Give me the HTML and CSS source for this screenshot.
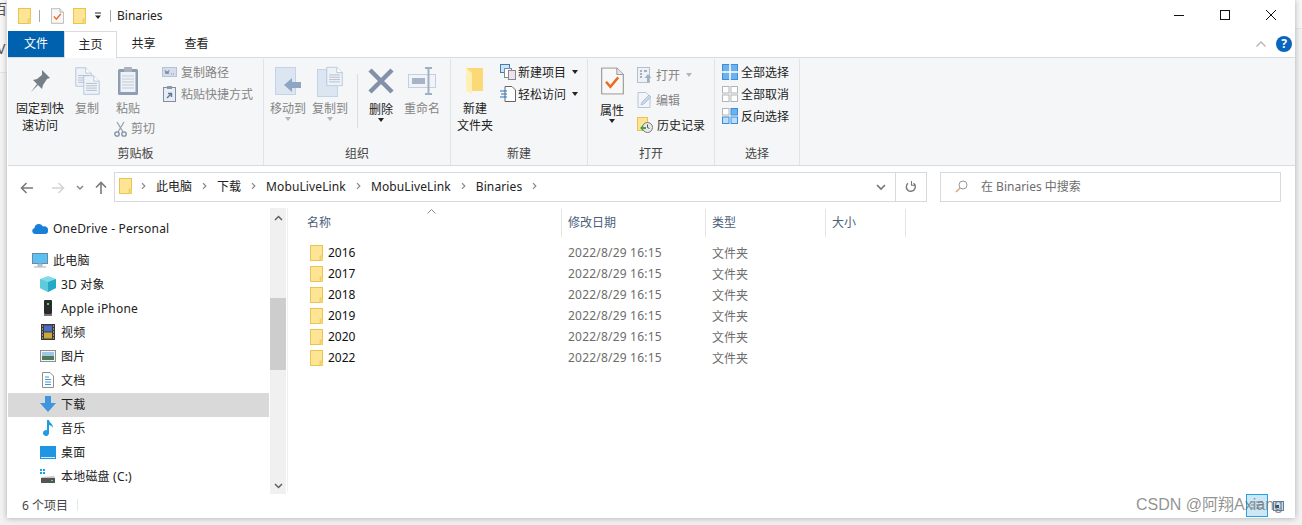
FILE: index.html
```html
<!DOCTYPE html>
<html lang="zh-CN">
<head>
  <meta charset="UTF-8">
  <title>Binaries</title>
  <link rel="stylesheet" href="styles.css">
</head>
<body>
  <svg class="defs" width="0" height="0">
    <symbol id="folder" viewBox="0 0 13 16">
      <rect x="0.5" y="0.5" width="12" height="15" fill="#fee596" stroke="#ebc34f"/>
      <rect x="10" y="11" width="3" height="5" fill="#f6d673" stroke="#ebc34f" stroke-width="0.6"/>
    </symbol>
    <symbol id="chev" viewBox="0 0 6 10">
      <path d="M1.2 1.5 4.6 5 1.2 8.5" fill="none" stroke="#8a8a8a" stroke-width="1.5"/>
    </symbol>
    <symbol id="doc-check" viewBox="0 0 32 38">
      <path d="M1 1h21l9 9v27H1z" fill="#f8f8f8" stroke="#8c8c8c" stroke-width="1.4"/>
      <path d="M22 1v9h9" fill="#e6e6e6" stroke="#8c8c8c" stroke-width="1.2"/>
      <path d="M7 20l6 7 11-13" fill="none" stroke="#ef6a1f" stroke-width="3.4"/>
    </symbol>
    <symbol id="page" viewBox="0 0 22 26">
      <path d="M1 1h13l7 7v17H1z" fill="#eef3fa" stroke="#a9bad4"/>
      <path d="M14 1v7h7" fill="#fff" stroke="#a9bad4"/>
      <path d="M4 11h14M4 14h14M4 17h14M4 20h14" stroke="#a8b0bc"/>
    </symbol>
    <symbol id="sel" viewBox="0 0 16 16">
      <rect x="0.5" y="0.5" width="6.5" height="6.5" fill="#fff" stroke="#b5b5b5"/>
      <rect x="9" y="0.5" width="6.5" height="6.5" fill="#fff" stroke="#b5b5b5"/>
      <rect x="0.5" y="9" width="6.5" height="6.5" fill="#fff" stroke="#b5b5b5"/>
      <rect x="9" y="9" width="6.5" height="6.5" fill="#fff" stroke="#b5b5b5"/>
    </symbol>
  </svg>

  <div class="desktop">
    <div class="behind-left"><span class="peek-a">百</span><span class="peek-b">V</span></div>

    <div class="window">
      <div class="titlebar">
        <svg class="qa-folder" width="13" height="16"><use href="#folder"/></svg>
        <span class="qa-sep"></span>
        <svg class="qa-doc" width="13" height="16"><use href="#doc-check"/></svg>
        <svg class="qa-folder2" width="13" height="16"><use href="#folder"/></svg>
        <svg class="qa-drop" width="8" height="8" viewBox="0 0 8 8"><path d="M1 1h6" stroke="#222"/><path d="M1 3.500h6L4 7z" fill="#222"/></svg>
        <span class="qa-sep qa-sep-last"></span>
        <span class="title-text">Binaries</span>
        <div class="win-buttons">
          <svg width="12" height="12" viewBox="0 0 12 12"><path d="M1 6.500h10" stroke="#111"/></svg>
          <svg width="12" height="12" viewBox="0 0 12 12"><rect x="1.500" y="1.500" width="9" height="9" fill="none" stroke="#111"/></svg>
          <svg width="12" height="12" viewBox="0 0 12 12"><path d="M1 1l10 10M11 1 1 11" stroke="#111"/></svg>
        </div>
      </div>

      <div class="tabs">
        <div class="tab tab-file">文件</div>
        <div class="tab tab-active">主页</div>
        <div class="tab tab-share">共享</div>
        <div class="tab tab-view">查看</div>
        <div class="tabs-right">
          <svg width="12" height="8" viewBox="0 0 12 8"><path d="M1.500 6.500 6 2l4.500 4.500" fill="none" stroke="#b4b4b4" stroke-width="1.300"/></svg>
          <span class="help">?</span>
        </div>
      </div>

      <div class="ribbon">
        <section class="group group-clip">
          <div class="group-body">
            <div class="big big-pin">
              <div class="big-icon">
                <svg width="22" height="24" viewBox="0 0 22 24"><path d="M13 1l8 8-3 1-4 6-1 4-4-4-7 7 6-8-4-4 4-1 5-4z" fill="#757f88"/></svg>
              </div>
              <span class="on">固定到快</span>
              <span class="on">速访问</span>
            </div>
            <div class="big big-copy">
              <div class="big-icon">
                <svg width="25" height="29" viewBox="0 0 25 29">
                  <svg x="0" y="0" width="17" height="20" viewBox="0 0 22 26"><use href="#page"/></svg>
                  <svg x="8" y="7" width="17" height="22" viewBox="0 0 22 26"><use href="#page"/></svg>
                </svg>
              </div>
              <span class="off">复制</span>
            </div>
            <div class="big big-paste">
              <div class="big-icon">
                <svg width="22" height="30" viewBox="0 0 22 30">
                  <rect x="1" y="3" width="20" height="26" rx="1.500" fill="#8e9db2"/>
                  <rect x="3.500" y="6" width="15" height="20" fill="#eef2f8"/>
                  <path d="M5 10h12M5 13h12M5 16h12M5 19h12M5 22h12" stroke="#c3cbd6"/>
                  <rect x="7" y="1" width="8" height="5" rx="1" fill="#a9b2bd"/>
                </svg>
              </div>
              <span class="off">粘贴</span>
              <div class="cut">
                <svg width="13" height="16" viewBox="0 0 13 16"><path d="M3 1l6 10M10 1 4 11" stroke="#9aa3ad" stroke-width="1.300"/><circle cx="3" cy="13" r="2.200" fill="none" stroke="#7f8fa6" stroke-width="1.300"/><circle cx="10" cy="13" r="2.200" fill="none" stroke="#7f8fa6" stroke-width="1.300"/></svg>
                <span class="off">剪切</span>
              </div>
            </div>
            <div class="small-col small-clip">
              <div class="small">
                <svg width="15" height="10" viewBox="0 0 15 10"><rect x="0.500" y="0.500" width="14" height="9" fill="#d5dded" stroke="#b6c1d3"/><path d="M3 3l1 4 1-3 1 3 1-4M9 7h1M11 7h1" fill="none" stroke="#6c7a90" stroke-width="0.800"/></svg>
                <span class="off">复制路径</span>
              </div>
              <div class="small">
                <svg width="13" height="16" viewBox="0 0 13 16"><rect x="0.500" y="1.500" width="12" height="14" fill="#e8edf4" stroke="#7f8ea3"/><rect x="4" y="0" width="5" height="3" fill="#8e99a8"/><path d="M4 12l4-4M5 7.500h3.500V11" fill="none" stroke="#5f7896" stroke-width="1.400"/></svg>
                <span class="off">粘贴快捷方式</span>
              </div>
            </div>
          </div>
          <div class="group-title">剪贴板</div>
        </section>

        <section class="group group-org">
          <div class="group-body">
            <div class="big big-move">
              <div class="big-icon">
                <svg width="26" height="28" viewBox="0 0 26 28"><rect x="0.500" y="0.500" width="20" height="27" fill="#dce6f3" stroke="#c5d3e6"/><path d="M9 18l8-7v4h9v6h-9v4z" fill="#8ea6c2"/></svg>
              </div>
              <span class="off">移动到</span>
              <i class="drop drop-off"></i>
            </div>
            <div class="big big-copyto">
              <div class="big-icon">
                <svg width="26" height="31" viewBox="0 0 26 31"><rect x="0.500" y="3.500" width="20" height="27" fill="#dce6f3" stroke="#c5d3e6"/><svg x="9" y="0" width="17" height="21" viewBox="0 0 22 26"><use href="#page"/></svg></svg>
              </div>
              <span class="off">复制到</span>
              <i class="drop drop-off"></i>
            </div>
            <span class="vsep"></span>
            <div class="big big-del">
              <div class="big-icon">
                <svg width="26" height="26" viewBox="0 0 26 26"><path d="M2 2l22 22M24 2 2 24" stroke="#8290a8" stroke-width="4.500"/></svg>
              </div>
              <span class="on lower">删除</span>
              <i class="drop"></i>
            </div>
            <div class="big big-ren">
              <div class="big-icon">
                <svg width="28" height="28" viewBox="0 0 28 28"><rect x="0.500" y="7.500" width="27" height="13" fill="#f0f4f9" stroke="#c3d0e0"/><rect x="4" y="11" width="13" height="6" fill="#a7b4c7"/><path d="M17 1h7M17 27h7M20.500 1v26" stroke="#9fb0c6" stroke-width="2"/></svg>
              </div>
              <span class="off">重命名</span>
            </div>
          </div>
          <div class="group-title">组织</div>
        </section>

        <section class="group group-new">
          <div class="group-body">
            <div class="big big-newf">
              <div class="big-icon">
                <svg width="18" height="28" viewBox="0 0 18 28"><path d="M0 1h17v23H5z" fill="#fbd977"/><path d="M0 1l6 5v21L0 24z" fill="#fff0b8"/></svg>
              </div>
              <span class="on">新建</span>
              <span class="on">文件夹</span>
            </div>
            <div class="small-col small-new">
              <div class="small">
                <svg width="16" height="16" viewBox="0 0 16 16"><rect x="0.500" y="0.500" width="9" height="8" fill="#cfe3f7" stroke="#3f7fb8"/><rect x="4.500" y="4.500" width="7" height="9" fill="#fff" stroke="#7e8a98"/><rect x="8.500" y="6.500" width="7" height="9" fill="#f4e1e6" stroke="#7e8a98"/></svg>
                <span class="on">新建项目</span>
                <i class="drop drop-side"></i>
              </div>
              <div class="small">
                <svg width="16" height="16" viewBox="0 0 16 16"><path d="M5 .5h7l3.500 3.500v11.500H5z" fill="#fff" stroke="#666"/><path d="M0 5h7M1 8h6M0 11h7" stroke="#1f77c9" stroke-width="1.200"/></svg>
                <span class="on">轻松访问</span>
                <i class="drop drop-side"></i>
              </div>
            </div>
          </div>
          <div class="group-title">新建</div>
        </section>

        <section class="group group-open">
          <div class="group-body">
            <div class="big big-prop">
              <div class="big-icon">
                <svg width="23" height="28" viewBox="0 0 32 38"><use href="#doc-check"/></svg>
              </div>
              <span class="on lower2">属性</span>
              <i class="drop"></i>
            </div>
            <div class="small-col small-open">
              <div class="small">
                <svg width="15" height="16" viewBox="0 0 15 16"><rect x="0.500" y="0.500" width="12" height="15" fill="#eef1f6" stroke="#b4bfce"/><path d="M3 4h2M3 7h2M3 10h2M7 4h3" stroke="#8c9bb0" stroke-width="1.400"/><path d="M11 7l3.500 4H12v4h-2v-4H7.500z" fill="#9fb0c6"/></svg>
                <span class="off">打开</span>
                <i class="drop drop-side drop-off"></i>
              </div>
              <div class="small">
                <svg width="15" height="16" viewBox="0 0 15 16"><path d="M1 .5h8l4 4v11H1z" fill="#f2f5f9" stroke="#b8c4d4"/><path d="M4 13l1-3 7-7 2 2-7 7z" fill="#c7d6e8" stroke="#9fb0c6" stroke-width="0.600"/></svg>
                <span class="off">编辑</span>
              </div>
              <div class="small">
                <svg width="16" height="16" viewBox="0 0 16 16"><rect x="0.500" y="0.500" width="10" height="13" fill="#fee596" stroke="#ebc34f"/><circle cx="10.500" cy="10.500" r="5" fill="#e9e9e9" stroke="#777"/><path d="M10.500 7.500v3l2 1" fill="none" stroke="#555"/><path d="M3 11l3-3v2h3v2H6v2z" fill="#3fa34d"/></svg>
                <span class="on">历史记录</span>
              </div>
            </div>
          </div>
          <div class="group-title">打开</div>
        </section>

        <section class="group group-select">
          <div class="group-body">
            <div class="small-col small-select">
              <div class="small">
                <svg width="16" height="16" viewBox="0 0 16 16"><rect x="0.500" y="0.500" width="15" height="15" fill="#6fb1ec" stroke="#3a8edb"/><path d="M8 0v16M0 8h16" stroke="#fff" stroke-width="1.500"/></svg>
                <span class="on">全部选择</span>
              </div>
              <div class="small">
                <svg width="16" height="16"><use href="#sel"/></svg>
                <span class="on">全部取消</span>
              </div>
              <div class="small">
                <svg width="16" height="16" viewBox="0 0 16 16"><rect x="0.500" y="0.500" width="6.500" height="6.500" fill="#fff" stroke="#b5b5b5"/><rect x="9" y="0.500" width="6.500" height="6.500" fill="#6fb1ec" stroke="#3a8edb"/><rect x="0.500" y="9" width="6.500" height="6.500" fill="#bcdcf7" stroke="#3a8edb"/><rect x="9" y="9" width="6.500" height="6.500" fill="#bcdcf7" stroke="#3a8edb"/></svg>
                <span class="on">反向选择</span>
              </div>
            </div>
          </div>
          <div class="group-title">选择</div>
        </section>
      </div>

      <div class="navbar">
        <div class="nav-buttons">
          <svg width="14" height="12" viewBox="0 0 14 12"><path d="M13 6H2M6.500 1 1.500 6l5 5" fill="none" stroke="#7a7a7a" stroke-width="1.600"/></svg>
          <svg class="nav-fwd" width="14" height="12" viewBox="0 0 14 12"><path d="M1 6h11M7.500 1l5 5-5 5" fill="none" stroke="#d4d4d4" stroke-width="1.600"/></svg>
          <svg class="nav-recent" width="8" height="6" viewBox="0 0 8 6"><path d="M1 1l3 3 3-3" fill="none" stroke="#8a8a8a" stroke-width="1.500"/></svg>
          <svg class="nav-up" width="12" height="13" viewBox="0 0 12 13"><path d="M6 13V2M1 6.500l5-5 5 5" fill="none" stroke="#7a7a7a" stroke-width="1.600"/></svg>
        </div>
        <div class="address">
          <div class="crumbs">
            <svg class="crumb-folder" width="13" height="16"><use href="#folder"/></svg>
            <svg class="crumb-chev" width="5" height="10"><use href="#chev"/></svg>
            <span>此电脑</span>
            <svg class="crumb-chev" width="5" height="10"><use href="#chev"/></svg>
            <span>下载</span>
            <svg class="crumb-chev" width="5" height="10"><use href="#chev"/></svg>
            <span class="crumb-latin">MobuLiveLink</span>
            <svg class="crumb-chev" width="5" height="10"><use href="#chev"/></svg>
            <span class="crumb-latin">MobuLiveLink</span>
            <svg class="crumb-chev" width="5" height="10"><use href="#chev"/></svg>
            <span class="crumb-latin">Binaries</span>
            <svg class="crumb-chev" width="5" height="10"><use href="#chev"/></svg>
          </div>
          <div class="addr-drop">
            <svg width="10" height="7" viewBox="0 0 10 7"><path d="M1 1l4 4 4-4" fill="none" stroke="#777" stroke-width="1.700"/></svg>
          </div>
          <div class="addr-refresh">
            <svg width="12" height="12" viewBox="0 0 12 12"><path d="M8.500 2.200A4.500 4.500 0 1 1 3 2.300" fill="none" stroke="#777" stroke-width="1.400"/><path d="M6.500 0v4.200H10.500" fill="none" stroke="#777" stroke-width="1.100"/></svg>
          </div>
        </div>
        <div class="search">
          <svg width="13" height="13" viewBox="0 0 13 13"><circle cx="8" cy="5" r="4" fill="none" stroke="#9a9a9a"/><path d="M5 8l-4 4" stroke="#c9a27c" stroke-width="1.200"/></svg>
          <span>在 Binaries 中搜索</span>
        </div>
      </div>

      <div class="main">
        <aside class="sidebar">
          <div class="tree">
            <div class="tree-row tree-top tree-gap">
              <svg width="16" height="11" viewBox="0 0 16 11"><path d="M3 11a3 3 0 0 1-.5-5.900A4.500 4.500 0 0 1 11 3.500 3.800 3.800 0 0 1 16 8c0 1.800-1 3-3 3z" fill="#1a7fd6"/></svg>
              <span>OneDrive - Personal</span>
            </div>
            <div class="tree-row tree-top">
              <svg width="16" height="15" viewBox="0 0 16 15"><rect x="0.500" y="0.500" width="15" height="10" fill="#5cc0f3" stroke="#6d8aa0"/><path d="M6 11h4v2H6zM2 14h12" stroke="#9fb2c0" fill="#cfd8df"/></svg>
              <span>此电脑</span>
            </div>
            <div class="tree-row">
              <svg width="16" height="16" viewBox="0 0 16 16"><path d="M8 0l8 3v9l-8 4-8-4V3z" fill="#7fdbe8"/><path d="M8 6v10l8-4V3z" fill="#25a9c4"/><path d="M0 3l8 3v10l-8-4z" fill="#5ecbdd"/></svg>
              <span>3D 对象</span>
            </div>
            <div class="tree-row">
              <svg width="16" height="16" viewBox="0 0 16 16"><rect x="4" y="0" width="8" height="14" rx="1" fill="#2b2b2b"/><rect x="7" y="3" width="2" height="2" fill="#3fe05a"/><rect x="4" y="14" width="8" height="2" fill="#777"/></svg>
              <span>Apple iPhone</span>
            </div>
            <div class="tree-row">
              <svg width="16" height="16" viewBox="0 0 16 16"><rect x="1" y="0" width="14" height="16" fill="#3a3a3a"/><rect x="4" y="1.500" width="8" height="6" fill="#4a6fc4"/><rect x="4" y="8.500" width="8" height="6" fill="#c9a93c"/><path d="M2 2h1M2 5h1M2 8h1M2 11h1M2 14h1M13 2h1M13 5h1M13 8h1M13 11h1M13 14h1" stroke="#ddd"/></svg>
              <span>视频</span>
            </div>
            <div class="tree-row">
              <svg width="16" height="12" viewBox="0 0 16 12"><rect x="0.500" y="0.500" width="15" height="11" fill="#f4f4f4" stroke="#8e8e8e"/><rect x="2" y="2" width="12" height="4" fill="#9fc6e2"/><rect x="2" y="6" width="12" height="4" fill="#4d7a58"/></svg>
              <span>图片</span>
            </div>
            <div class="tree-row">
              <svg width="12" height="16" viewBox="0 0 12 16"><path d="M.5.500h7.500l3.500 3.500v11.500H.5z" fill="#fff" stroke="#8f8f8f"/><path d="M3 5h4M3 7.500h6M3 10h6M3 12.500h6" stroke="#3f9ad8"/></svg>
              <span>文档</span>
            </div>
            <div class="tree-row tree-selected">
              <svg width="16" height="16" viewBox="0 0 16 16"><path d="M5 0h6v7h5l-8 9-8-9h5z" fill="#3f94e0"/></svg>
              <span>下载</span>
            </div>
            <div class="tree-row">
              <svg width="12" height="16" viewBox="0 0 12 16"><path d="M5 0h2c.5 3 4 3.500 4 8-1-2-2-2.500-4-3v8a3 3 0 1 1-2-2.800z" fill="#1f9be6"/></svg>
              <span>音乐</span>
            </div>
            <div class="tree-row">
              <svg width="16" height="13" viewBox="0 0 16 13"><rect x="0" y="0" width="16" height="13" fill="#1f95e4"/><path d="M1 11.500h14" stroke="#d5efff"/></svg>
              <span>桌面</span>
            </div>
            <div class="tree-row">
              <svg width="16" height="14" viewBox="0 0 16 14"><path d="M0 0h2v2H0zM3 0h2v2H3zM0 3h2v2H0zM3 3h2v2H3z" fill="#18a3e6"/><path d="M2 8l12-1 1 2H1z" fill="#c6c6c6"/><rect x="1" y="9" width="14" height="5" fill="#555"/><rect x="11" y="11" width="2" height="1" fill="#4fe05a"/></svg>
              <span>本地磁盘 (C:)</span>
            </div>
          </div>
          <div class="scrollbar">
            <svg class="sb-up" width="9" height="6" viewBox="0 0 9 6"><path d="M1 5l3.500-3.500L8 5" fill="none" stroke="#606060" stroke-width="1.500"/></svg>
            <div class="sb-thumb"></div>
            <svg class="sb-down" width="9" height="6" viewBox="0 0 9 6"><path d="M1 1l3.500 3.500L8 1" fill="none" stroke="#606060" stroke-width="1.500"/></svg>
          </div>
        </aside>

        <div class="list">
          <div class="list-head">
            <svg class="sort-mark" width="9" height="5" viewBox="0 0 9 5"><path d="M.5 4.500l4-4 4 4" fill="none" stroke="#8a8a8a"/></svg>
            <div class="col col-name">名称</div>
            <div class="col col-date">修改日期</div>
            <div class="col col-type">类型</div>
            <div class="col col-size">大小</div>
          </div>
          <div class="rows">
            <div class="row"><div class="cell-name"><svg width="13" height="16"><use href="#folder"/></svg>2016</div><div class="cell-date">2022/8/29 16:15</div><div class="cell-type">文件夹</div></div>
            <div class="row"><div class="cell-name"><svg width="13" height="16"><use href="#folder"/></svg>2017</div><div class="cell-date">2022/8/29 16:15</div><div class="cell-type">文件夹</div></div>
            <div class="row"><div class="cell-name"><svg width="13" height="16"><use href="#folder"/></svg>2018</div><div class="cell-date">2022/8/29 16:15</div><div class="cell-type">文件夹</div></div>
            <div class="row"><div class="cell-name"><svg width="13" height="16"><use href="#folder"/></svg>2019</div><div class="cell-date">2022/8/29 16:15</div><div class="cell-type">文件夹</div></div>
            <div class="row"><div class="cell-name"><svg width="13" height="16"><use href="#folder"/></svg>2020</div><div class="cell-date">2022/8/29 16:15</div><div class="cell-type">文件夹</div></div>
            <div class="row"><div class="cell-name"><svg width="13" height="16"><use href="#folder"/></svg>2022</div><div class="cell-date">2022/8/29 16:15</div><div class="cell-type">文件夹</div></div>
          </div>
        </div>
      </div>

      <div class="statusbar">
        <span class="status-count">6 个项目</span>
        <span class="status-sep"></span>
        <div class="view-toggles">
          <div class="view-btn view-on">
            <svg width="12" height="11" viewBox="0 0 12 11"><path d="M0 2h3M5 2h7M0 5h3M5 5h7M0 8h3M5 8h7" stroke="#7c8794"/></svg>
          </div>
          <div class="view-btn view-off">
            <svg width="11" height="10" viewBox="0 0 11 10"><rect x="0.500" y="0.500" width="10" height="9" fill="#cfe3f7" stroke="#5d7fa3"/><rect x="2" y="4" width="4" height="3" fill="#33536f"/></svg>
          </div>
        </div>
      </div>
    </div>

    <div class="behind-right"></div>
  </div>
  <div class="watermark">CSDN @阿翔Axiang</div>
</body>
</html>
```

FILE: styles.css
```css
* {
  box-sizing: border-box;
}

html, body {
  margin: 0;
  padding: 0;
  height: 525px;
  overflow: hidden;
}

body {
  font-family: "Noto Sans", "Noto Sans CJK SC", sans-serif;
  font-size: 12px;
  color: #222;
  background-color: #f1f1f1;
  position: relative;
}

svg {
  display: block;
  flex: none;
}

.defs {
  position: absolute;
}

.desktop {
  display: flex;
  height: 518px;
}

.behind-left {
  width: 7px;
  overflow: hidden;
  background: linear-gradient(#f7f7f7 72px, #e6e6e6 72px, #e6e6e6 73px, #f3f3f3 73px);
  color: #555;
  font-size: 14px;
  line-height: 18px;
  white-space: nowrap;
}

.peek-a {
  display: block;
  margin-left: -7px;
}

.peek-b {
  display: block;
  margin-top: 22px;
  margin-left: -3px;
}

.behind-right {
  width: 7px;
  background: linear-gradient(#f7f7f7 28px, #e6e6e6 28px, #e6e6e6 29px, #f3f3f3 29px);
}

.window {
  width: 1288px;
  background-color: #fff;
  padding-left: 1px;
  box-shadow: 0 0 6px rgba(0, 0, 0, 0.3);
  display: flex;
  flex-direction: column;
  position: relative;
}

/* title bar */
.titlebar {
  height: 31px;
  display: flex;
  align-items: center;
  flex: none;
}

.qa-folder {
  margin-left: 10px;
}

.qa-sep {
  width: 1px;
  height: 12px;
  background-color: #a8a8a8;
  margin-left: 8px;
}

.qa-doc {
  margin-left: 11px;
}

.qa-folder2 {
  margin-left: 9px;
}

.qa-drop {
  margin-left: 8px;
}

.qa-sep-last {
  margin-left: 8px;
}

.title-text {
  margin-left: 6px;
  line-height: 31px;
}

.win-buttons {
  margin-left: auto;
  display: flex;
  gap: 34px;
  padding-right: 18px;
  padding-bottom: 1px;
}

/* tabs */
.tabs {
  height: 27px;
  display: flex;
  flex: none;
  border-bottom: 1px solid #dadbdc;
}

.tab {
  height: 26px;
  line-height: 25px;
  text-align: center;
}

.tab-file {
  width: 56px;
  background-color: #0061ae;
  color: #fff;
}

.tab-active {
  width: 53px;
  height: 27px;
  border: 1px solid #dadbdc;
  border-bottom: none;
  background: #fff;
}

.tab-share {
  width: 53px;
}

.tab-view {
  width: 53px;
}

.tabs-right {
  margin-left: auto;
  display: flex;
  align-items: center;
  gap: 9px;
  padding-right: 3px;
}

.help {
  width: 16px;
  height: 16px;
  border-radius: 50%;
  background-color: #0a66bd;
  color: #fff;
  font-weight: 700;
  font-size: 12px;
  line-height: 16px;
  text-align: center;
}

/* ribbon */
.ribbon {
  height: 108px;
  flex: none;
  display: flex;
  background-color: #f5f6f7;
  border-bottom: 1px solid #dadbdc;
}

.group {
  display: flex;
  flex-direction: column;
  border-right: 1px solid #e2e3e4;
  margin: 1px 0 0;
}

.group-clip {
  width: 256px;
}

.group-org {
  width: 187px;
}

.group-new {
  width: 137px;
}

.group-open {
  width: 127px;
}

.group-select {
  width: 85px;
}

.group-body {
  height: 86px;
  display: flex;
  padding-top: 3px;
}

.group-title {
  height: 20px;
  line-height: 18px;
  text-align: center;
  color: #444;
}

.big {
  display: flex;
  flex-direction: column;
  align-items: center;
  line-height: 17px;
  white-space: nowrap;
}

.big-icon {
  height: 38px;
  display: flex;
  align-items: center;
  justify-content: center;
}

.on {
  color: #222;
}

.off {
  color: #858585;
}

.lower {
  margin-top: 1px;
}

.lower2 {
  margin-top: 2px;
}

.big-pin {
  width: 56px;
  margin-left: 4px;
}

.big-copy {
  width: 38px;
}

.big-paste {
  width: 44px;
}

.cut {
  display: flex;
  align-items: center;
  gap: 4px;
  margin-top: 3px;
  margin-left: 8px;
  align-self: flex-start;
}

.small-col {
  display: flex;
  flex-direction: column;
}

.small {
  height: 22px;
  display: flex;
  align-items: center;
  gap: 4px;
  white-space: nowrap;
}

.small-clip {
  margin: -1px 0 0 12px;
  width: 96px;
}

.small-clip .small svg {
  width: 15px;
}

.big-move {
  width: 48px;
}

.big-copyto {
  width: 36px;
}

.big-del {
  width: 46px;
}

.big-ren {
  width: 36px;
}

.vsep {
  width: 1px;
  height: 54px;
  margin: 12px 0 0 9px;
  background-color: #dcdddf;
}

.drop {
  display: block;
  width: 0;
  height: 0;
  border-left: 3.5px solid transparent;
  border-right: 3.5px solid transparent;
  border-top: 4px solid #222;
}

.drop-off {
  border-top-color: #b5b5b5;
}

.drop-side {
  margin: 0 0 0 4px;
}

.drop-off.drop-side {
  margin-left: 2px;
}

.big-newf {
  width: 48px;
}

.small-new {
  margin: -1px 0 0 1px;
}

.small-new .small {
  gap: 2px;
}

.big-prop {
  width: 48px;
}

.small-open {
  margin-left: 1px;
}

.small-open .small {
  height: 25px;
}

.small-select {
  margin: -1px 0 0 7px;
}

.small-select .small {
  gap: 3px;
}

/* address row */
.navbar {
  height: 42px;
  flex: none;
  display: flex;
  padding-top: 6px;
}

.nav-buttons {
  width: 106px;
  height: 30px;
  display: flex;
  align-items: center;
  padding-left: 12px;
  padding-top: 1px;
}

.nav-fwd {
  margin-left: 17px;
}

.nav-recent {
  margin-left: 11px;
}

.nav-up {
  margin-left: 11px;
}

.address {
  width: 813px;
  height: 30px;
  display: flex;
  border: 1px solid #d9d9d9;
}

.crumbs {
  flex: 1;
  display: flex;
  align-items: center;
  gap: 10px;
  padding: 0 0 2px 4px;
}

.crumb-folder {
  margin-right: -1px;
}

.crumb-latin {
  letter-spacing: 0.12px;
}

.addr-drop {
  width: 21px;
  display: flex;
  align-items: center;
  justify-content: center;
  padding-right: 7px;
}

.addr-refresh {
  width: 31px;
  display: flex;
  align-items: center;
  justify-content: center;
  border-left: 1px solid #d9d9d9;
}

.search {
  width: 341px;
  height: 30px;
  margin-left: 13px;
  display: flex;
  align-items: center;
  gap: 13px;
  padding: 0 0 2px 14px;
  border: 1px solid #d9d9d9;
  color: #6d6d6d;
}

/* sidebar and list */
.main {
  flex: 1;
  display: flex;
  min-height: 0;
}

.sidebar {
  width: 280px;
  display: flex;
  flex: none;
  border-right: 1px solid #f0f0f0;
}

.tree {
  width: 261px;
  padding-top: 9px;
}

.tree-row {
  height: 24px;
  display: flex;
  align-items: center;
  padding: 0 0 2px 32px;
  white-space: nowrap;
  letter-spacing: 0.2px;
}

.tree-row svg {
  margin-right: 5px;
}

.tree-row svg[width="12"] {
  margin: 0 7px 0 2px;
}

.tree-top {
  padding-left: 24px;
}

.tree-gap {
  margin-bottom: 8px;
}

.tree-selected {
  background-color: #d9d9d9;
}

.scrollbar {
  width: 16px;
  margin-left: 1px;
  background-color: #f0f0f0;
  display: flex;
  flex-direction: column;
  align-items: center;
  height: 286px;
}

.sb-up {
  margin-top: 7px;
}

.sb-thumb {
  width: 16px;
  height: 72px;
  margin-top: 77px;
  background-color: #cdcdcd;
}

.sb-down {
  margin-top: auto;
  margin-bottom: 5px;
}

.list {
  flex: 1;
  min-width: 0;
}

.list-head {
  display: grid;
  grid-template-columns: 274px 144px 120px 80px;
  height: 29px;
  position: relative;
  color: #4c607a;
}

.sort-mark {
  position: absolute;
  left: 139px;
  top: 1px;
}

.col {
  line-height: 28px;
  border-right: 1px solid #e5e5e5;
  margin-top: 1px;
}

.col-name {
  padding-left: 19px;
}

.col-date,
.col-type,
.col-size {
  padding-left: 6px;
}

.rows {
  padding-top: 5px;
}

.row {
  display: grid;
  grid-template-columns: 274px 144px 120px;
  height: 21px;
  align-items: center;
}

.cell-name {
  display: flex;
  align-items: center;
  gap: 5px;
  padding-left: 22px;
  color: #111;
}

.cell-date {
  padding-left: 6px;
  color: #6d6d6d;
  letter-spacing: 0.2px;
}

.cell-type {
  padding-left: 6px;
  color: #6d6d6d;
}

/* status bar */
.statusbar {
  height: 26px;
  flex: none;
  display: flex;
  align-items: center;
  padding-left: 14px;
  color: #444;
}

.status-sep {
  width: 1px;
  height: 12px;
  margin-left: 9px;
  background-color: #e8e8e8;
}

.view-toggles {
  margin-left: auto;
  display: flex;
  gap: 5px;
  padding-right: 11px;
  align-self: flex-end;
  margin-bottom: 1px;
}

.view-btn {
  height: 23px;
  display: flex;
  align-items: center;
  justify-content: center;
}

.view-on {
  width: 22px;
  background-color: #cce8f6;
  border: 1px solid #1fa5e6;
}

.view-off {
  width: 11px;
}

.watermark {
  position: absolute;
  left: 1136px;
  top: 494px;
  font-family: "Liberation Sans", "Noto Sans CJK SC", sans-serif;
  font-size: 16px;
  line-height: 22px;
  color: rgba(110, 110, 110, 0.75);
  white-space: nowrap;
}
```
